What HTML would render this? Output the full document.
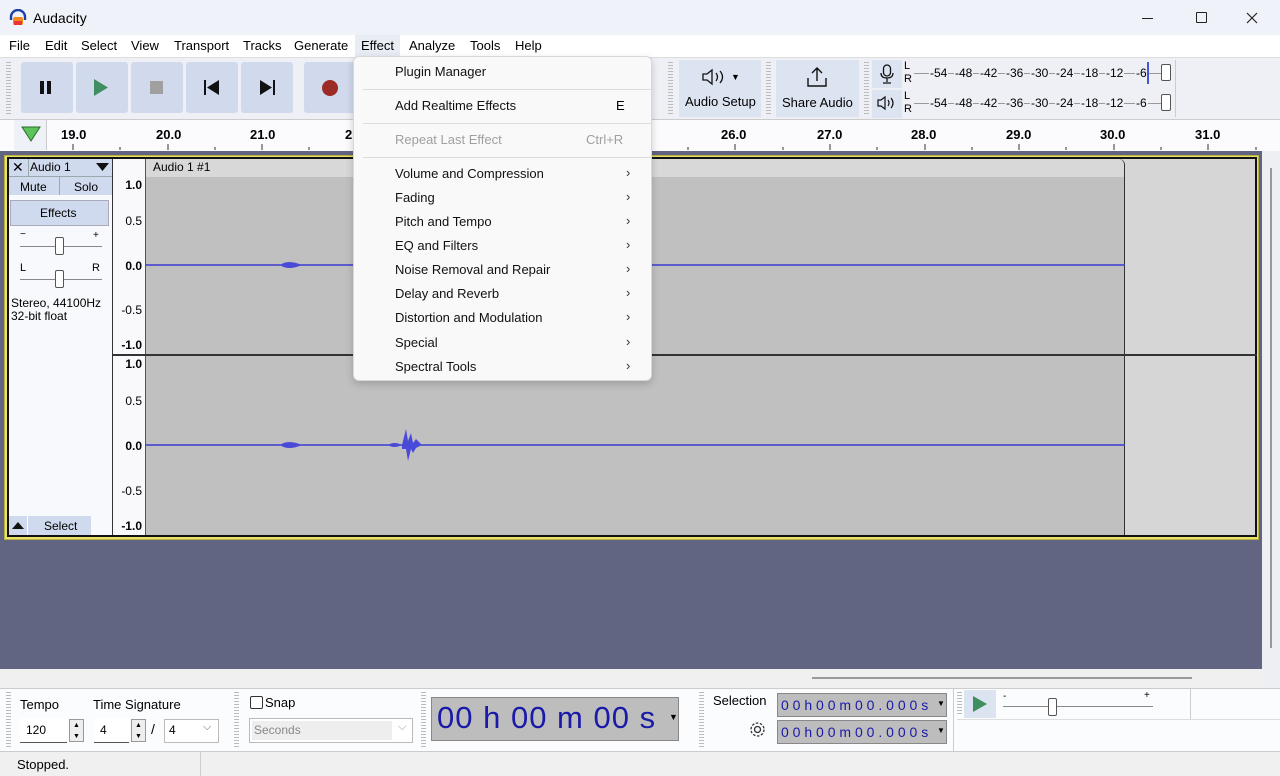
<!DOCTYPE html>
<html><head><meta charset="utf-8"><style>
*{box-sizing:border-box;margin:0;padding:0}
body{width:1280px;height:776px;overflow:hidden;background:#eef1f7;font-family:"Liberation Sans",sans-serif;font-size:13px;color:#000;position:relative}
.a{position:absolute}
.btn{position:absolute;top:62px;width:52px;height:51px;background:#d1daed;border-radius:3px}
.rl{position:absolute;top:127px;font-weight:bold;font-size:13px}
.mi{position:absolute;left:41px;font-size:13px;color:#111}
.arr{position:absolute;left:272px;font-size:13px;color:#333}
.sep{position:absolute;left:9px;width:288px;height:1px;background:#dcdcdc}
.vl{position:absolute;font-size:12px}
.grip{position:absolute;width:5px;background:repeating-linear-gradient(#bbb 0 1px,transparent 1px 3px)}
.m{position:absolute;font-size:12px;background:#eef0f6;padding:0 1px}
</style></head><body>
<div class="a" style="left:0;top:0;width:1280px;height:35px;background:#eff2f8"></div>
<svg class="a" style="left:9px;top:9px" width="18" height="17" viewBox="0 0 18 17"><path d="M2 11 V8 a7 7 0 0 1 14 0 V11" fill="none" stroke="#1b3fa8" stroke-width="2.4"/><rect x="4" y="8" width="10" height="8" rx="2" fill="#f08a1c"/><rect x="5" y="12" width="8" height="4" fill="#e33"/></svg>
<div class="a" style="left:33px;top:10px;font-size:14px">Audacity</div>
<div class="a" style="left:1142px;top:18px;width:11px;height:1px;background:#222"></div>
<div class="a" style="left:1196px;top:12px;width:11px;height:11px;border:1px solid #222;border-radius:1px"></div>
<svg class="a" style="left:1246px;top:12px" width="12" height="12"><path d="M1 1L11 11M11 1L1 11" stroke="#222" stroke-width="1.2"/></svg>
<div class="a" style="left:0;top:35px;width:1280px;height:22px;background:#fff"></div>
<div class="a" style="left:355px;top:35px;width:45px;height:22px;background:#e8ecf3"></div>
<div class="a" style="left:9px;top:38px;font-size:13px">
<span class="a" style="left:0">File</span><span class="a" style="left:36px">Edit</span><span class="a" style="left:72px">Select</span><span class="a" style="left:122px">View</span><span class="a" style="left:165px">Transport</span><span class="a" style="left:234px">Tracks</span><span class="a" style="left:285px">Generate</span><span class="a" style="left:352px">Effect</span><span class="a" style="left:400px">Analyze</span><span class="a" style="left:461px">Tools</span><span class="a" style="left:506px">Help</span></div>
<div class="a" style="left:0;top:57px;width:1280px;height:62px;background:#eef0f6;border-top:1px solid #ddd"></div>
<div class="grip" style="left:6px;top:62px;height:52px"></div>
<div class="btn" style="left:21px"></div><div class="btn" style="left:76px"></div><div class="btn" style="left:131px"></div><div class="btn" style="left:186px"></div><div class="btn" style="left:241px"></div><div class="btn" style="left:304px"></div>
<div class="a" style="left:40px;top:81px;width:4px;height:13px;background:#111"></div><div class="a" style="left:47px;top:81px;width:4px;height:13px;background:#111"></div>
<svg class="a" style="left:93px;top:79px" width="16" height="17"><path d="M1 0L15 8.5L1 17Z" fill="#3f8f61"/></svg>
<div class="a" style="left:150px;top:81px;width:13px;height:13px;background:#a0a0a0"></div>
<svg class="a" style="left:204px;top:80px" width="16" height="15"><rect x="0" y="0" width="2" height="15" fill="#111"/><path d="M15 0V15L3 7.5Z" fill="#111"/></svg>
<svg class="a" style="left:259px;top:80px" width="16" height="15"><rect x="14" y="0" width="2" height="15" fill="#111"/><path d="M1 0V15L13 7.5Z" fill="#111"/></svg>
<div class="a" style="left:322px;top:80px;width:16px;height:16px;border-radius:50%;background:#9c2a25"></div>
<div class="grip" style="left:668px;top:62px;height:52px"></div>
<div class="a" style="left:679px;top:60px;width:82px;height:57px;background:#dde4f1"></div>
<svg class="a" style="left:701px;top:68px" width="26" height="18"><path d="M2 6h4l5-4v14l-5-4H2z" fill="none" stroke="#111" stroke-width="1.3"/><path d="M15 5q3 4 0 8M19 3q5 6 0 12" fill="none" stroke="#111" stroke-width="1.3"/></svg>
<div class="a" style="left:731px;top:72px;font-size:9px">▼</div>
<div class="a" style="left:685px;top:94px">Audio Setup</div>
<div class="grip" style="left:766px;top:62px;height:52px"></div>
<div class="a" style="left:776px;top:60px;width:83px;height:57px;background:#dde4f1"></div>
<svg class="a" style="left:806px;top:66px" width="22" height="22"><path d="M11 2V15M6 7l5-5 5 5M2 12v8h18v-8" fill="none" stroke="#111" stroke-width="1.4"/></svg>
<div class="a" style="left:782px;top:95px">Share Audio</div>
<div class="grip" style="left:864px;top:62px;height:52px"></div>
<div class="a" style="left:872px;top:60px;width:30px;height:28px;background:#dde4f1"></div>
<div class="a" style="left:872px;top:90px;width:30px;height:28px;background:#dde4f1"></div>
<svg class="a" style="left:880px;top:64px" width="14" height="20"><rect x="3.5" y="1" width="7" height="11" rx="3.5" fill="none" stroke="#111" stroke-width="1.3"/><path d="M1 9q0 5 6 5 6 0 6-5M7 14v4M3 19h8" fill="none" stroke="#111" stroke-width="1.3"/></svg>
<svg class="a" style="left:877px;top:95px" width="22" height="16"><path d="M1 5h3l4-3v12l-4-3H1z" fill="none" stroke="#111" stroke-width="1.2"/><path d="M11 5q2 3 0 6M14 3q4 5 0 10" fill="none" stroke="#111" stroke-width="1.2"/></svg>
<div class="a" style="left:904px;top:60px;font-size:11px;line-height:13px">L<br>R</div>
<div class="a" style="left:904px;top:90px;font-size:11px;line-height:13px">L<br>R</div>
<div class="a" style="left:914px;top:73px;width:250px;height:1px;background:#999"></div>
<div class="a" style="left:914px;top:103px;width:250px;height:1px;background:#999"></div>
<div class="m" style="left:929px;top:66px">-54</div><div class="m" style="left:954px;top:66px">-48</div><div class="m" style="left:979px;top:66px">-42</div><div class="m" style="left:1005px;top:66px">-36</div><div class="m" style="left:1030px;top:66px">-30</div><div class="m" style="left:1055px;top:66px">-24</div><div class="m" style="left:1080px;top:66px">-18</div><div class="m" style="left:1105px;top:66px">-12</div><div class="m" style="left:1135px;top:66px">-6</div>
<div class="m" style="left:929px;top:96px">-54</div><div class="m" style="left:954px;top:96px">-48</div><div class="m" style="left:979px;top:96px">-42</div><div class="m" style="left:1005px;top:96px">-36</div><div class="m" style="left:1030px;top:96px">-30</div><div class="m" style="left:1055px;top:96px">-24</div><div class="m" style="left:1080px;top:96px">-18</div><div class="m" style="left:1105px;top:96px">-12</div><div class="m" style="left:1135px;top:96px">-6</div>
<div class="a" style="left:1147px;top:62px;width:2px;height:22px;background:#4455dd"></div>
<div class="a" style="left:1161px;top:64px;width:10px;height:17px;border:1px solid #555;border-radius:2px;background:#fff"></div>
<div class="a" style="left:1161px;top:94px;width:10px;height:17px;border:1px solid #555;border-radius:2px;background:#fff"></div>
<div class="a" style="left:1175px;top:60px;width:1px;height:57px;background:#ccc"></div>
<div class="a" style="left:0;top:119px;width:1280px;height:32px;background:#fbfbfd;border-top:1px solid #ccc"></div>
<div class="a" style="left:14px;top:120px;width:33px;height:30px;background:#eef1f7;border-right:1px solid #ccc"></div>
<svg class="a" style="left:21px;top:126px" width="20" height="16"><path d="M1 1H19L10 15Z" fill="#5dc45d" stroke="#2a6a2a"/></svg>
<div class="rl" style="left:61px">19.0</div><div class="rl" style="left:156px">20.0</div><div class="rl" style="left:250px">21.0</div><div class="rl" style="left:345px">2</div>
<div class="rl" style="left:721px">26.0</div><div class="rl" style="left:817px">27.0</div><div class="rl" style="left:911px">28.0</div><div class="rl" style="left:1006px">29.0</div><div class="rl" style="left:1100px">30.0</div><div class="rl" style="left:1195px">31.0</div>
<svg class="a" style="left:0;top:140px" width="1280" height="10"><g stroke="#333"><path d="M73 4v6M120 7v3M168 4v6M215 7v3M262 4v6M309 7v3M357 4v6M688 7v3M735 4v6M783 7v3M830 4v6M877 7v3M925 4v6M972 7v3M1019 4v6M1066 7v3M1114 4v6M1161 7v3M1208 4v6M1256 7v3"/></g></svg>
<div class="a" style="left:0;top:151px;width:1262px;height:518px;background:#626582"></div>
<div class="a" style="left:1262px;top:151px;width:18px;height:537px;background:#eeeff3"></div>
<div class="a" style="left:1270px;top:168px;width:2px;height:480px;background:#999"></div>
<div class="a" style="left:0;top:669px;width:1262px;height:19px;background:#f0f0f0"></div>
<div class="a" style="left:812px;top:677px;width:380px;height:2px;background:#999"></div>
<div class="a" style="left:4px;top:155px;width:1255px;height:385px;background:#e8e26a;border:1px solid #b8b040"></div>
<div class="a" style="left:7px;top:157px;width:1250px;height:380px;background:#d6d6d6;border:2px solid #111"></div>
<div class="a" style="left:9px;top:159px;width:103px;height:376px;background:#f7f9fc"></div>
<div class="a" style="left:9px;top:159px;width:103px;height:36px;background:#d0daee"></div>
<div class="a" style="left:9px;top:176px;width:103px;height:1px;background:#9aa"></div>
<div class="a" style="left:28px;top:159px;width:1px;height:17px;background:#9aa"></div>
<div class="a" style="left:59px;top:177px;width:1px;height:18px;background:#9aa"></div>
<div class="a" style="left:12px;top:159px;font-size:14px">✕</div>
<div class="a" style="left:30px;top:160px;font-size:12px">Audio 1</div>
<svg class="a" style="left:96px;top:163px" width="13" height="8"><path d="M0 0H13L6.5 8Z" fill="#111"/></svg>
<div class="a" style="left:20px;top:180px;font-size:12px">Mute</div>
<div class="a" style="left:74px;top:180px;font-size:12px">Solo</div>
<div class="a" style="left:10px;top:200px;width:99px;height:26px;background:#d0daee;border:1px solid #aab"></div>
<div class="a" style="left:40px;top:206px;font-size:12px">Effects</div>
<div class="a" style="left:20px;top:229px;font-size:10px">−</div><div class="a" style="left:93px;top:230px;font-size:10px">+</div>
<div class="a" style="left:20px;top:246px;width:82px;height:1px;background:#888"></div>
<div class="a" style="left:55px;top:237px;width:9px;height:18px;background:#fff;border:1px solid #555;border-radius:2px"></div>
<div class="a" style="left:20px;top:262px;font-size:11px">L</div><div class="a" style="left:92px;top:262px;font-size:11px">R</div>
<div class="a" style="left:20px;top:279px;width:82px;height:1px;background:#888"></div>
<div class="a" style="left:55px;top:270px;width:9px;height:18px;background:#fff;border:1px solid #555;border-radius:2px"></div>
<div class="a" style="left:11px;top:297px;font-size:12px;line-height:13px">Stereo, 44100Hz<br>32-bit float</div>
<div class="a" style="left:9px;top:516px;width:82px;height:19px;background:#d0daee"></div>
<div class="a" style="left:27px;top:516px;width:1px;height:19px;background:#fff"></div>
<svg class="a" style="left:12px;top:522px" width="12" height="7"><path d="M0 7H12L6 0Z" fill="#111"/></svg>
<div class="a" style="left:44px;top:519px;font-size:12px">Select</div>
<div class="a" style="left:112px;top:159px;width:34px;height:376px;background:#f9f9fc;border-left:1px solid #333;border-right:1px solid #555"></div>
<div class="vl a" style="left:112px;width:30px;text-align:right;top:178px;font-weight:bold">1.0</div>
<div class="vl a" style="left:112px;width:30px;text-align:right;top:214px">0.5</div>
<div class="vl a" style="left:112px;width:30px;text-align:right;top:259px;font-weight:bold">0.0</div>
<div class="vl a" style="left:112px;width:30px;text-align:right;top:303px">-0.5</div>
<div class="vl a" style="left:112px;width:30px;text-align:right;top:338px;font-weight:bold">-1.0</div>
<div class="vl a" style="left:112px;width:30px;text-align:right;top:357px;font-weight:bold">1.0</div>
<div class="vl a" style="left:112px;width:30px;text-align:right;top:394px">0.5</div>
<div class="vl a" style="left:112px;width:30px;text-align:right;top:439px;font-weight:bold">0.0</div>
<div class="vl a" style="left:112px;width:30px;text-align:right;top:484px">-0.5</div>
<div class="vl a" style="left:112px;width:30px;text-align:right;top:519px;font-weight:bold">-1.0</div>
<div class="a" style="left:146px;top:159px;width:979px;height:376px;background:#c0c0c0;border-right:1px solid #333;border-top-right-radius:6px"></div>
<div class="a" style="left:146px;top:159px;width:978px;height:18px;background:#d8d8d8;border-top-right-radius:6px"></div>
<div class="a" style="left:153px;top:160px;font-size:12px">Audio 1 #1</div>
<div class="a" style="left:112px;top:354px;width:1145px;height:2px;background:#333"></div>
<svg class="a" style="left:140px;top:240px" width="990" height="230">
<path d="M6 25H985M6 205H985" stroke="#3b3bcf" stroke-width="1.6"/>
<path d="M140 25q8-6 22 0q-14 6-22 0Z M140 205q8-6 22 0q-14 6-22 0Z M248 205q6-4 14 0q-8 4-14 0Z" fill="#4a4ad8"/>
<path d="M262 205l4-16 2 12 3-8 2 10 3-4 6 6-6 3-3 5-2-4-3 12-2-12-4 0Z" fill="#4a4ad8"/>
</svg>
<div class="a" style="left:0;top:688px;width:1280px;height:63px;background:#fbfcfe;border-top:1px solid #ccc"></div>
<div class="grip" style="left:6px;top:692px;height:55px"></div>
<div class="a" style="left:20px;top:697px">Tempo</div><div class="a" style="left:93px;top:697px">Time Signature</div>
<div class="a" style="left:20px;top:718px;width:47px;height:25px;background:#fff;border-bottom:1px solid #555"></div>
<div class="a" style="left:26px;top:723px;font-size:12px">120</div>
<div class="a" style="left:69px;top:719px;width:15px;height:23px;border:1px solid #999;background:#eee;font-size:7px;text-align:center;line-height:11px">▲<br>▼</div>
<div class="a" style="left:94px;top:718px;width:35px;height:25px;background:#fff;border-bottom:1px solid #555"></div>
<div class="a" style="left:100px;top:723px;font-size:12px">4</div>
<div class="a" style="left:131px;top:719px;width:15px;height:23px;border:1px solid #999;background:#eee;font-size:7px;text-align:center;line-height:11px">▲<br>▼</div>
<div class="a" style="left:151px;top:721px;font-size:14px">/</div>
<div class="a" style="left:164px;top:719px;width:55px;height:24px;border:1px solid #bbb;background:#fff"></div>
<div class="a" style="left:169px;top:723px;font-size:12px">4</div><div class="a" style="left:203px;top:721px;font-size:11px;color:#666">⌵</div>
<div class="grip" style="left:234px;top:692px;height:55px"></div>
<div class="a" style="left:250px;top:696px;width:13px;height:13px;border:1px solid #333;border-radius:2px;background:#fff"></div>
<div class="a" style="left:265px;top:695px">Snap</div>
<div class="a" style="left:249px;top:718px;width:164px;height:25px;border:1px solid #bbb;background:#fff"></div>
<div class="a" style="left:252px;top:721px;width:140px;height:19px;background:#eee"></div>
<div class="a" style="left:254px;top:723px;font-size:12px;color:#888">Seconds</div><div class="a" style="left:398px;top:721px;font-size:11px;color:#999">⌵</div>
<div class="grip" style="left:421px;top:692px;height:55px"></div>
<div class="a" style="left:431px;top:697px;width:248px;height:44px;background:#bdbdbd;border:1px solid #888"></div>
<div class="a" style="left:437px;top:700px;font-size:31px;color:#1a1aa8;white-space:nowrap;letter-spacing:1px">00 h 00 m 00 s</div>
<div class="a" style="left:669px;top:712px;font-size:9px">▼</div>
<div class="grip" style="left:699px;top:692px;height:55px"></div>
<div class="a" style="left:713px;top:693px">Selection</div>
<svg class="a" style="left:749px;top:721px" width="17" height="17"><circle cx="8.5" cy="8.5" r="3" fill="none" stroke="#333" stroke-width="1.3"/><circle cx="8.5" cy="8.5" r="6.5" fill="none" stroke="#333" stroke-width="1.3" stroke-dasharray="2.5 1.6"/></svg>
<div class="a" style="left:777px;top:693px;width:170px;height:24px;background:#bdbdbd;border:1px solid #888"></div>
<div class="a" style="left:777px;top:720px;width:170px;height:24px;background:#bdbdbd;border:1px solid #888"></div>
<div class="a" style="left:781px;top:697px;font-size:14px;color:#1a1aa8;letter-spacing:3.9px;white-space:nowrap">00h00m00.000s</div>
<div class="a" style="left:781px;top:724px;font-size:14px;color:#1a1aa8;letter-spacing:3.9px;white-space:nowrap">00h00m00.000s</div>
<div class="a" style="left:937px;top:699px;font-size:8px">▼</div><div class="a" style="left:937px;top:726px;font-size:8px">▼</div>
<div class="a" style="left:953px;top:688px;width:1px;height:63px;background:#ccc"></div>
<div class="grip" style="left:957px;top:692px;height:24px"></div>
<div class="a" style="left:964px;top:690px;width:32px;height:28px;background:#dde4f1"></div>
<svg class="a" style="left:973px;top:696px" width="14" height="16"><path d="M0 0L14 8L0 16Z" fill="#3f8f61"/></svg>
<div class="a" style="left:1003px;top:691px;font-size:10px">-</div><div class="a" style="left:1144px;top:690px;font-size:10px">+</div>
<div class="a" style="left:1003px;top:706px;width:150px;height:1px;background:#888"></div>
<div class="a" style="left:1048px;top:698px;width:9px;height:18px;background:#fff;border:1px solid #555;border-radius:2px"></div>
<div class="a" style="left:957px;top:719px;width:323px;height:1px;background:#ddd"></div>
<div class="a" style="left:1190px;top:688px;width:1px;height:31px;background:#ccc"></div>
<div class="a" style="left:0;top:751px;width:1280px;height:25px;background:#f0f0f0;border-top:1px solid #ccc"></div>
<div class="a" style="left:200px;top:752px;width:1px;height:24px;background:#ccc"></div>
<div class="a" style="left:17px;top:757px;font-size:13px">Stopped.</div>
<div class="a" style="left:353px;top:56px;width:299px;height:325px;background:#f9f9f9;border:1px solid #d8d8d8;border-radius:6px;box-shadow:0 3px 8px rgba(0,0,0,0.18)">
<div class="mi" style="top:7px">Plugin Manager</div>
<div class="sep" style="top:32px"></div>
<div class="mi" style="top:41px">Add Realtime Effects</div><div class="a" style="left:262px;top:41px">E</div>
<div class="sep" style="top:66px"></div>
<div class="mi" style="top:75px;color:#a0a0a0">Repeat Last Effect</div><div class="a" style="left:232px;top:75px;color:#a0a0a0">Ctrl+R</div>
<div class="sep" style="top:100px"></div>
<div class="mi" style="top:109px">Volume and Compression</div><div class="arr" style="top:108px">›</div>
<div class="mi" style="top:133px">Fading</div><div class="arr" style="top:132px">›</div>
<div class="mi" style="top:157px">Pitch and Tempo</div><div class="arr" style="top:156px">›</div>
<div class="mi" style="top:181px">EQ and Filters</div><div class="arr" style="top:180px">›</div>
<div class="mi" style="top:205px">Noise Removal and Repair</div><div class="arr" style="top:204px">›</div>
<div class="mi" style="top:229px">Delay and Reverb</div><div class="arr" style="top:228px">›</div>
<div class="mi" style="top:253px">Distortion and Modulation</div><div class="arr" style="top:252px">›</div>
<div class="mi" style="top:278px">Special</div><div class="arr" style="top:277px">›</div>
<div class="mi" style="top:302px">Spectral Tools</div><div class="arr" style="top:301px">›</div>
</div>
</body></html>
